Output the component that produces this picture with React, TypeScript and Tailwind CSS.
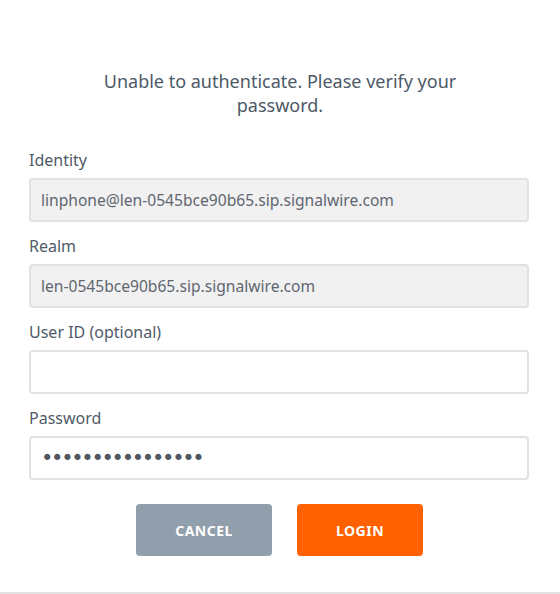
import React from 'react';

const Field: React.FC<{ label: string; value?: string; disabled?: boolean; type?: string }> = ({
  label,
  value = '',
  disabled,
  type = 'text',
}) => (
  <div className="flex flex-col">
    <label className="text-[16px] leading-[20px] text-[#4f5b67] mb-2">{label}</label>
    <input
      type={type}
      readOnly
      value={value}
      className={`h-[44px] w-full rounded-[4px] border-2 border-[#e1e1e1] px-[10px] outline-none ${
        disabled ? 'bg-[#f1f1f1]' : 'bg-white'
      } ${
        type === 'password'
          ? "font-['DejaVu_Sans',sans-serif] text-[21px] tracking-[-2.3px] text-[#50575f]"
          : 'text-[15.6px] text-[#5f6670]'
      }`}
    />
  </div>
);

export default function App() {
  return (
    <div className="h-[594px] w-[560px] bg-white border-b-2 border-[#e2e2e2] font-['Noto_Sans',sans-serif]">
      <div className="flex flex-col px-[29px] pt-[69px]">
        <p className="mx-auto w-[400px] text-center text-[18px] leading-[24px] text-[#4d5967]">
          Unable to authenticate. Please verify your password.
        </p>
        <div className="mt-[33px] flex flex-col gap-[14px] pr-[2px]">
          <Field label="Identity" value="linphone@len-0545bce90b65.sip.signalwire.com" disabled />
          <Field label="Realm" value="len-0545bce90b65.sip.signalwire.com" disabled />
          <Field label="User ID (optional)" />
          <Field label="Password" type="password" value="abcdefghijklmnop" />
        </div>
        <div className="mt-[24px] flex justify-center gap-[25px] pr-[1px]">
          <button className="h-[52px] w-[136px] rounded-[4px] bg-[#919eab] text-[14px] font-bold tracking-[0.5px] text-white">
            CANCEL
          </button>
          <button className="h-[52px] w-[126px] rounded-[4px] bg-[#ff6000] text-[14px] font-bold tracking-[0.5px] text-white">
            LOGIN
          </button>
        </div>
      </div>
    </div>
  );
}
